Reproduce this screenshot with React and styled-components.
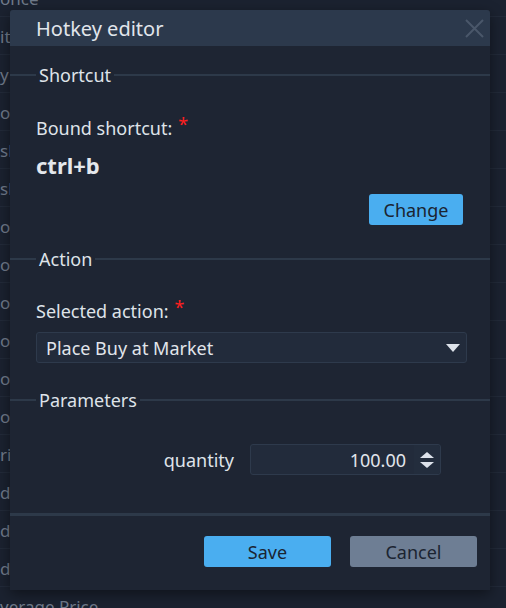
import React from "react";
import styled, { createGlobalStyle } from "styled-components";

const GlobalStyle = createGlobalStyle`
  html, body { margin: 0; padding: 0; background: #1b2230; }
  body { font-family: "Noto Sans", "Open Sans", sans-serif; overflow: hidden; }
  * { box-sizing: border-box; }
`;

const Page = styled.div`
  position: relative;
  width: 506px;
  height: 608px;
  overflow: hidden;
  background: #1b2230;
`;

const RowList = styled.div`
  display: flex;
  flex-direction: column;
  margin-top: -21px;
`;

const BgRow = styled.div`
  height: 38px;
  display: flex;
  align-items: center;
  border-bottom: 1px solid #222a39;
  color: #707a8a;
  font-size: 17px;
  white-space: nowrap;
  padding-top: 2px;
`;

const Overlay = styled.div`
  position: absolute;
  inset: 0;
`;

const Modal = styled.div`
  position: absolute;
  left: 10px;
  top: 10px;
  width: 480px;
  height: 580px;
  background: #1e2533;
  border-radius: 3px 3px 0 0;
  box-shadow: 0 4px 14px rgba(0, 0, 0, 0.45);
  display: flex;
  flex-direction: column;
  color: #dfe3e9;
`;

const Header = styled.div`
  height: 36px;
  flex: none;
  background: #2c394c;
  border-radius: 3px 3px 0 0;
  display: flex;
  align-items: center;
  justify-content: space-between;
  padding: 0 6px 0 26px;
`;

const Title = styled.div`
  font-size: 20px;
  color: #e1e5eb;
`;

const CloseButton = styled.button`
  background: none;
  border: none;
  padding: 0;
  width: 19px;
  height: 19px;
  display: flex;
  cursor: pointer;
`;

const Body = styled.div`
  flex: 1;
  display: flex;
  flex-direction: column;
  padding-top: 17px;
`;

const SectionHeader = styled.div`
  height: 24px;
  display: flex;
  align-items: center;
  &::before {
    content: "";
    width: 26px;
    height: 2px;
    background: #2d3949;
  }
  &::after {
    content: "";
    flex: 1;
    height: 2px;
    background: #2d3949;
  }
`;

const SectionTitle = styled.span`
  padding: 0 3px;
  font-size: 18px;
  color: #dfe3e9;
`;

const Section = styled.div`
  display: flex;
  flex-direction: column;
  padding: ${(p) => (p.$flush ? "0" : "0 23px 0 26px")};
  margin-top: ${(p) => p.$top}px;
`;

const FieldLabel = styled.div`
  height: 24px;
  line-height: 24px;
  font-size: 18px;
  color: #dfe3e9;
`;

const Required = styled.span`
  color: #ff1f1f;
  font-size: 18px;
  margin-left: 6px;
  position: relative;
  top: -4px;
`;

const Shortcut = styled.div`
  height: 26px;
  line-height: 26px;
  font-size: 22px;
  font-weight: 700;
  color: #e4e8ed;
  margin-top: 12px;
`;

const ButtonRow = styled.div`
  display: flex;
  justify-content: flex-end;
  gap: ${(p) => p.$gap || 0}px;
  margin-top: ${(p) => p.$top || 0}px;
  padding-right: ${(p) => p.$right || 0}px;
`;

const Button = styled.button`
  height: 31px;
  width: ${(p) => p.$width}px;
  border: none;
  border-radius: 3px;
  background: ${(p) => (p.$variant === "secondary" ? "#6e7e94" : "#4aaef0")};
  color: #1b2431;
  font-family: "Noto Sans", sans-serif;
  font-size: 18px;
  padding: 0;
  cursor: pointer;
`;

const Select = styled.div`
  height: 31px;
  margin-top: 9px;
  background: #222b3b;
  border: 1px solid #2e3a4c;
  border-radius: 3px;
  display: flex;
  align-items: center;
  justify-content: space-between;
  padding: 0 6px 0 9px;
  font-size: 18px;
  color: #e1e5eb;
`;

const ParamRow = styled.div`
  display: flex;
  justify-content: flex-end;
  align-items: center;
  gap: 16px;
  margin-top: 32px;
  padding-right: 49px;
`;

const ParamLabel = styled.span`
  font-size: 18px;
  color: #dfe3e9;
`;

const NumberInput = styled.div`
  width: 191px;
  height: 31px;
  background: #222b3b;
  border: 1px solid #2e3a4c;
  border-radius: 3px;
  display: flex;
  align-items: center;
  justify-content: flex-end;
  font-size: 18px;
  color: #e1e5eb;
`;

const Value = styled.span`
  padding-right: 8px;
`;

const Spinner = styled.div`
  width: 26px;
  height: 100%;
  display: flex;
  flex-direction: column;
  align-items: center;
  justify-content: center;
  gap: 4px;
  background: #232d3d;
  border-radius: 0 3px 3px 0;
`;

const Divider = styled.div`
  height: 3px;
  background: #2d3949;
  margin-top: 38px;
`;

const Footer = styled.div`
  padding: 20px 13px 23px 0;
`;

const bgLabels = [
  "once", "it", "y", "o", "sl", "sl", "op", "o", "o", "o", "o", "o",
  "ric", "d", "d", "d", "verage Price",
];

export default function App() {
  return (
    <>
      <GlobalStyle />
      <Page>
        <RowList>
          {bgLabels.map((t, i) => (
            <BgRow key={i}>{t}</BgRow>
          ))}
        </RowList>
        <Overlay>
          <Modal>
            <Header>
              <Title>Hotkey editor</Title>
              <CloseButton aria-label="Close">
                <svg width="19" height="19" viewBox="0 0 19 19">
                  <path d="M1 1 L18 18 M18 1 L1 18" stroke="#4a576a" strokeWidth="2" />
                </svg>
              </CloseButton>
            </Header>
            <Body>
              <SectionHeader>
                <SectionTitle>Shortcut</SectionTitle>
              </SectionHeader>
              <Section $top={29}>
                <FieldLabel>
                  Bound shortcut:<Required>*</Required>
                </FieldLabel>
                <Shortcut>ctrl+b</Shortcut>
                <ButtonRow $top={16} $right={4}>
                  <Button $width={94}>Change</Button>
                </ButtonRow>
              </Section>
              <Section $top={22} $flush>
                <SectionHeader>
                  <SectionTitle>Action</SectionTitle>
                </SectionHeader>
              </Section>
              <Section $top={28}>
                <FieldLabel>
                  Selected action:<Required>*</Required>
                </FieldLabel>
                <Select>
                  <span>Place Buy at Market</span>
                  <svg width="14" height="8" viewBox="0 0 14 8">
                    <path d="M0 0 H14 L7 8 Z" fill="#dde2ea" />
                  </svg>
                </Select>
              </Section>
              <Section $top={25} $flush>
                <SectionHeader>
                  <SectionTitle>Parameters</SectionTitle>
                </SectionHeader>
              </Section>
              <ParamRow>
                <ParamLabel>quantity</ParamLabel>
                <NumberInput>
                  <Value>100.00</Value>
                  <Spinner>
                    <svg width="14" height="6" viewBox="0 0 14 6">
                      <path d="M0 6 L7 0 L14 6 Z" fill="#dde2ea" />
                    </svg>
                    <svg width="14" height="6" viewBox="0 0 14 6">
                      <path d="M0 0 H14 L7 6 Z" fill="#dde2ea" />
                    </svg>
                  </Spinner>
                </NumberInput>
              </ParamRow>
              <Divider />
              <Footer>
                <ButtonRow $gap={19}>
                  <Button $width={127}>Save</Button>
                  <Button $width={127} $variant="secondary">Cancel</Button>
                </ButtonRow>
              </Footer>
            </Body>
          </Modal>
        </Overlay>
      </Page>
    </>
  );
}
